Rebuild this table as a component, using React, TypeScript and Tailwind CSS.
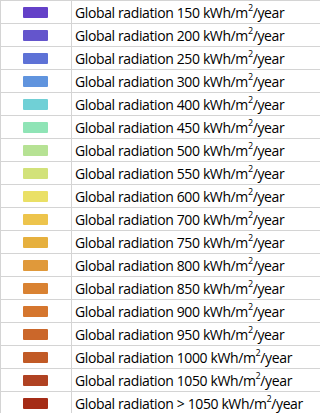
const rows = [
  { label: "150", color: "#6441c8" },
  { label: "200", color: "#6455cc" },
  { label: "250", color: "#5e72d6" },
  { label: "300", color: "#6094de" },
  { label: "400", color: "#70d0d6" },
  { label: "450", color: "#8fe4b6" },
  { label: "500", color: "#b6e294" },
  { label: "550", color: "#d2e27a" },
  { label: "600", color: "#eae066" },
  { label: "700", color: "#edc44c" },
  { label: "750", color: "#e6b03e" },
  { label: "800", color: "#e0993a" },
  { label: "850", color: "#d98232" },
  { label: "900", color: "#d5762e" },
  { label: "950", color: "#cb672a" },
  { label: "1000", color: "#c15a26" },
  { label: "1050", color: "#b04222" },
  { label: "> 1050", color: "#a52c16" },
];

export default function App() {
  return (
    <div
      className="w-[320px] h-[413px] overflow-hidden bg-white border-l border-[#d4d4d4] text-black"
      style={{ fontFamily: '"Open Sans", "Liberation Sans", sans-serif' }}
    >
      {rows.map((r) => (
        <div key={r.label} className="flex h-[23px] border-t border-[#d4d4d4]">
          <div className="w-[71px] shrink-0 border-r border-[#d4d4d4] flex items-center pl-[22px]">
            <div className="w-[25px] h-[11px] rounded-[1px]" style={{ backgroundColor: r.color }} />
          </div>
          <div className="flex items-center pl-[3px] pt-[1px] text-[14px] leading-none tracking-[-0.38px] whitespace-nowrap">
            <span>
              Global radiation {r.label} kWh/m
              <span className="text-[9px] relative -top-[7px]">2</span>
              /year
            </span>
          </div>
        </div>
      ))}
    </div>
  );
}
